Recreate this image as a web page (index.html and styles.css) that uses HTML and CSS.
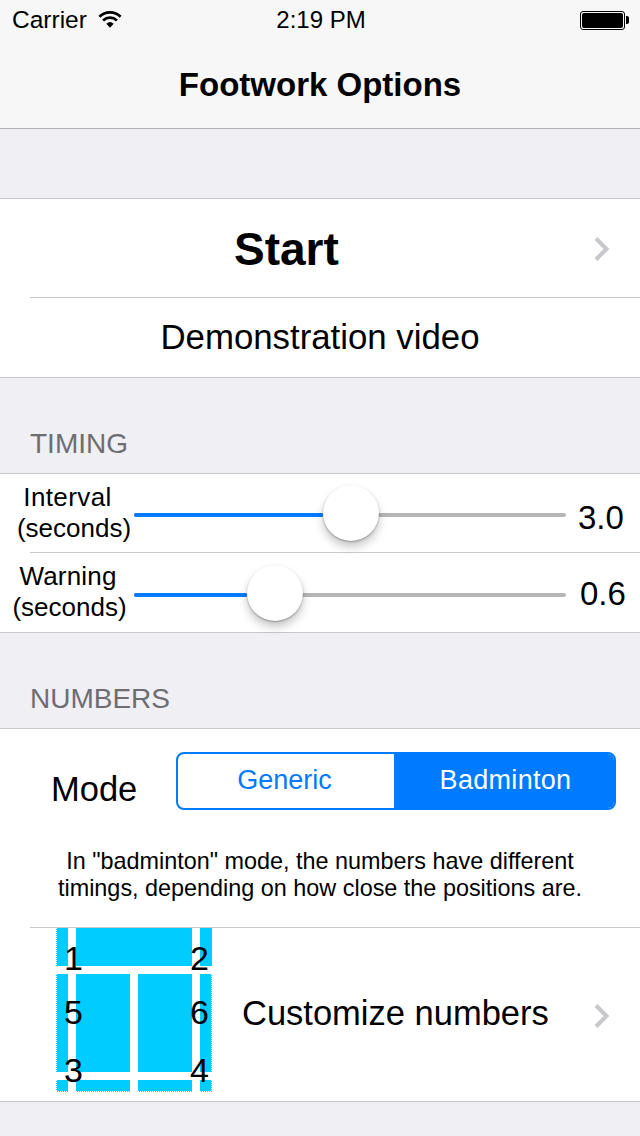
FILE: index.html
```html
<!DOCTYPE html>
<html lang="en">
<head>
  <meta charset="UTF-8">
  <title>Footwork Options</title>
  <link rel="stylesheet" href="styles.css">
</head>
<body>

<div class="topbar">
  <div class="statusbar">
    <div class="status-left">
      <span>Carrier</span>
      <svg class="wifi" width="24" height="20" viewBox="0 0 26 20">
        <path d="M1.5 6.5 A16.5 16.5 0 0 1 24.5 6.5" fill="none" stroke="#000" stroke-width="3"/>
        <path d="M5.5 10.5 A11 11 0 0 1 20.5 10.5" fill="none" stroke="#000" stroke-width="3"/>
        <path d="M9 14 A6 6 0 0 1 17 14 L13 18.5 Z" fill="#000"/>
      </svg>
    </div>
    <div class="status-time">2:19 PM</div>
    <div class="battery"><div class="battery-level"></div></div>
  </div>
  <h1 class="nav-title">Footwork Options</h1>
</div>

<div class="group first-group">
  <div class="row row-start">
    <span class="start-label">Start</span>
    <svg class="chevron" width="20" height="26" viewBox="0 0 20 26"><path d="M3 2.5 L13.5 13 L3 23.5" fill="none" stroke="#c7c7cc" stroke-width="4"/></svg>
  </div>
  <div class="row row-demo">Demonstration video</div>
</div>

<div class="section-title">TIMING</div>
<div class="group">
  <div class="row slider-row interval-row">
    <div class="slider-label"><span class="label-top">Interval</span><br>(seconds)</div>
    <div class="slider">
      <div class="slider-fill" style="width: 189px"></div>
      <div class="slider-thumb" style="left: 189px"></div>
    </div>
    <div class="slider-value">3.0</div>
  </div>
  <div class="row slider-row warning-row">
    <div class="slider-label"><span class="label-top">Warning</span><br>(seconds)</div>
    <div class="slider">
      <div class="slider-fill" style="width: 113px"></div>
      <div class="slider-thumb" style="left: 113px"></div>
    </div>
    <div class="slider-value">0.6</div>
  </div>
</div>

<div class="section-title">NUMBERS</div>
<div class="group">
  <div class="mode-block">
    <div class="mode-row">
      <span class="mode-label">Mode</span>
      <div class="segmented">
        <div class="segment">Generic</div>
        <div class="segment segment-on">Badminton</div>
      </div>
    </div>
    <p class="mode-note">In "badminton" mode, the numbers have different<br>timings, depending on how close the positions are.</p>
  </div>
  <div class="row row-custom">
    <svg class="court" width="156" height="164" viewBox="0 0 156 164">
      <g fill="#00ccff">
        <rect x="0" y="0" width="12" height="38"/>
        <rect x="20" y="0" width="116" height="38"/>
        <rect x="144" y="0" width="12" height="38"/>
        <rect x="0" y="46" width="12" height="98"/>
        <rect x="20" y="46" width="54" height="98"/>
        <rect x="82" y="46" width="54" height="98"/>
        <rect x="144" y="46" width="12" height="98"/>
        <rect x="0" y="152" width="12" height="12"/>
        <rect x="20" y="152" width="54" height="12"/>
        <rect x="82" y="152" width="54" height="12"/>
        <rect x="144" y="152" width="12" height="12"/>
      </g>
      <path class="court-edge" d="M0.5 0V164M155.5 46V164M0 163.5H156"/>
      <g class="court-numbers">
        <text x="8" y="42">1</text>
        <text x="134" y="42">2</text>
        <text x="8" y="96">5</text>
        <text x="134" y="96">6</text>
        <text x="8" y="154">3</text>
        <text x="134" y="154">4</text>
      </g>
    </svg>
    <span class="custom-label">Customize numbers</span>
    <svg class="chevron" width="20" height="26" viewBox="0 0 20 26"><path d="M3 2.5 L13.5 13 L3 23.5" fill="none" stroke="#c7c7cc" stroke-width="4"/></svg>
  </div>
</div>

</body>
</html>
```

FILE: styles.css
```css
* {
  box-sizing: border-box;
}
body {
  font-family: "Liberation Sans", Arial, sans-serif;
  margin: 0;
  padding: 0;
  height: 1136px;
  overflow: hidden;
  background-color: #efeff4;
  color: #000;
}
.topbar {
  height: 129px;
  background-color: #f7f7f7;
  border-bottom: 1px solid #b2b2b2;
}
.statusbar {
  height: 40px;
  padding: 0 11px 0 12px;
  display: grid;
  grid-template-columns: 1fr auto 1fr;
  align-items: center;
  font-size: 24.5px;
}
.status-left {
  display: flex;
  align-items: center;
  gap: 11px;
}
.status-time {
  font-size: 24px;
  margin-left: 1px;
}
.battery {
  justify-self: end;
  width: 45px;
  height: 19px;
  margin-right: 4px;
  padding: 1px;
  border: 1px solid #000;
  border-radius: 3px;
  position: relative;
}
.battery::after {
  content: "";
  position: absolute;
  right: -5px;
  top: 4px;
  width: 3px;
  height: 8px;
  background-color: #000;
  border-radius: 0 2px 2px 0;
}
.battery-level {
  height: 100%;
  background-color: #000;
  border-radius: 2px;
}
.nav-title {
  margin: 0;
  height: 88px;
  line-height: 90px;
  text-align: center;
  font-size: 33px;
  font-weight: bold;
}
.group {
  background-color: #fff;
  border-top: 1px solid #c8c7cc;
  border-bottom: 1px solid #c8c7cc;
}
.first-group {
  margin-top: 69px;
}
.section-title {
  height: 95px;
  padding: 0 30px 13px;
  display: flex;
  align-items: flex-end;
  font-size: 28px;
  color: #6d6d72;
}
.row {
  display: flex;
  align-items: center;
}
.row + .row,
.row-custom {
  position: relative;
}
.row + .row::before,
.row-custom::before {
  content: "";
  position: absolute;
  left: 30px;
  right: 0;
  top: 0;
  height: 1px;
  background-color: #c8c7cc;
}
.row-start {
  height: 98px;
  padding: 0 27px 0 30px;
  justify-content: space-between;
}
.start-label {
  font-size: 46px;
  font-weight: bold;
  margin-left: 204px;
  margin-top: 1px;
}
.chevron {
  flex: none;
  margin-top: 2px;
}
.row-demo {
  height: 80px;
  justify-content: center;
  font-size: 34.8px;
}
.slider-row {
  height: 78px;
}
.warning-row {
  height: 80px;
}
.slider-label {
  width: 134px;
  font-size: 26px;
  line-height: 31px;
  text-align: center;
}
.interval-row .slider-label {
  padding-left: 14px;
}
.interval-row .label-top {
  display: inline-block;
  margin-right: 13px;
  letter-spacing: 0.4px;
}
.warning-row .slider-label {
  padding-left: 12px;
  padding-right: 7px;
}
.warning-row .label-top {
  display: inline-block;
  margin-right: 3px;
  letter-spacing: 0.2px;
}
.slider {
  width: 432px;
  height: 4px;
  margin-top: 4px;
  background-color: #b6b6b6;
  border-radius: 2px;
  position: relative;
}
.warning-row .slider {
  margin-top: 6px;
}
.slider-fill {
  height: 100%;
  background-color: #007aff;
  border-radius: 2px;
}
.slider-thumb {
  position: absolute;
  top: -28px;
  width: 56px;
  height: 56px;
  background-color: #fff;
  border-radius: 50%;
  box-shadow: 0 6px 10px rgba(0,0,0,0.22), 0 1px 2px rgba(0,0,0,0.3);
}
.slider-value {
  font-size: 33px;
  margin-left: 12px;
  margin-top: 10px;
}
.warning-row .slider-value {
  margin-left: 14px;
  margin-top: 4px;
}
.mode-block {
  height: 198px;
}
.mode-row {
  display: flex;
  align-items: center;
  padding: 23px 24px 0 51px;
}
.mode-label {
  font-size: 34.5px;
  width: 125px;
  margin-top: 16px;
}
.segmented {
  display: flex;
  width: 440px;
  height: 58px;
  border: 2px solid #007aff;
  border-radius: 8px;
  overflow: hidden;
}
.segment {
  width: 216px;
  padding-right: 3px;
  text-align: center;
  line-height: 52px;
  font-size: 27px;
  color: #007aff;
}
.segment-on {
  flex: 1;
  padding: 0 0 0 3px;
  letter-spacing: 0.3px;
  color: #fff;
  background-color: #007aff;
}
.mode-note {
  margin: 38px 0 0;
  text-align: center;
  font-size: 23.4px;
  line-height: 27px;
}
.row-custom {
  height: 174px;
  padding: 0 27px 0 56px;
}
.court {
  flex: none;
  display: block;
  align-self: flex-start;
  margin-top: 1px;
}
.court-edge {
  fill: none;
  stroke: #fff;
  stroke-width: 1;
  stroke-dasharray: 1 1;
}
.court-numbers text {
  font-size: 34px;
  fill: #000;
}
.custom-label {
  flex: 1;
  font-size: 34.5px;
  margin-left: 30px;
  margin-bottom: 1px;
}
.row-custom .chevron {
  margin-top: 3px;
}
```
